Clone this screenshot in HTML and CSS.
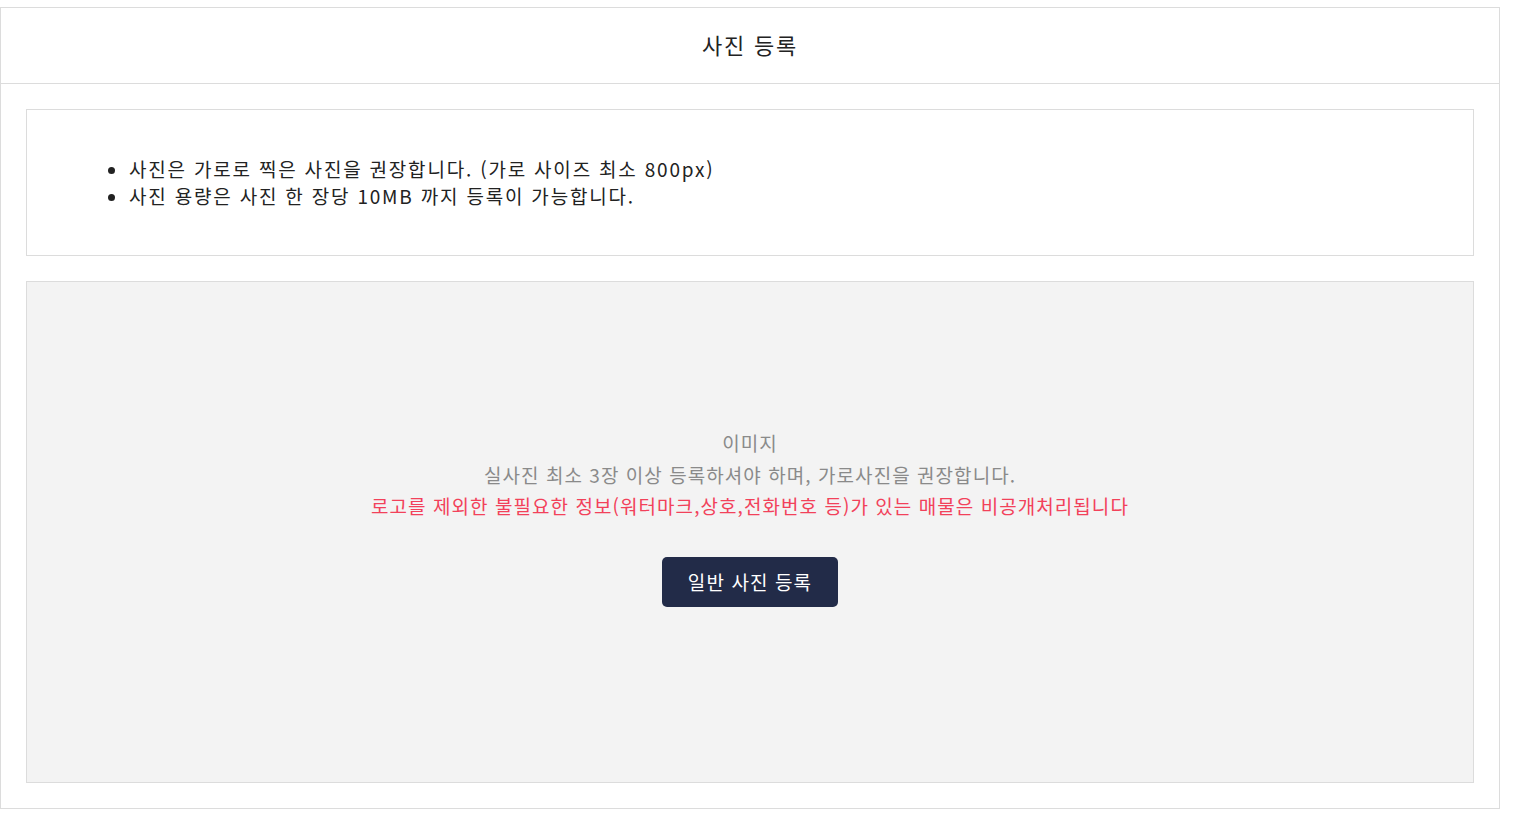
FILE: index.html
```html
<!DOCTYPE html>
<html lang="ko">
<head>
<meta charset="utf-8">
<link rel="stylesheet" href="styles.css">
</head>
<body>
<div class="panel">
  <div class="panel-head">사진 등록</div>
  <div class="panel-body">
    <div class="notice">
      <ul>
        <li>사진은 가로로 찍은 사진을 권장합니다. (가로 사이즈 최소 800px)</li>
        <li>사진 용량은 사진 한 장당 10MB 까지 등록이 가능합니다.</li>
      </ul>
    </div>
    <div class="dropzone">
      <p class="dz-text">이미지</p>
      <p class="dz-text">실사진 최소 3장 이상 등록하셔야 하며, 가로사진을 권장합니다.</p>
      <p class="dz-text dz-warn">로고를 제외한 불필요한 정보(워터마크,상호,전화번호 등)가 있는 매물은 비공개처리됩니다</p>
      <button class="btn-upload" type="button">일반 사진 등록</button>
    </div>
  </div>
</div>
</body>
</html>
```
FILE: styles.css
```css
html, body {
  margin: 0;
  padding: 0;
  background: #fff;
}
body {
  padding-top: 7px;
  font-family: "Noto Sans CJK KR", "Noto Sans", sans-serif;
  color: #222;
}
.panel {
  width: 1500px;
  box-sizing: border-box;
  border: 1px solid #dcdcdc;
}
.panel-head {
  height: 76px;
  box-sizing: border-box;
  padding-bottom: 3px;
  display: flex;
  align-items: center;
  justify-content: center;
  font-size: 22px;
  letter-spacing: 1.8px;
  color: #222;
  border-bottom: 1px solid #dcdcdc;
}
.panel-body {
  padding: 25px;
  display: flex;
  flex-direction: column;
  gap: 25px;
}
.notice {
  border: 1px solid #dcdcdc;
  padding: 45px 62px 46px;
  font-size: 19px;
  line-height: 27px;
  letter-spacing: 1.8px;
  color: #222;
}
.notice ul {
  margin: 0;
  padding-left: 40px;
}
.dropzone {
  height: 500px;
  background: #f3f3f3;
  border: 1px solid #dcdcdc;
  display: flex;
  flex-direction: column;
  align-items: center;
}
.dz-text {
  margin: 0;
  font-size: 19px;
  line-height: 31.5px;
  letter-spacing: 1.05px;
  color: #8a8a8a;
}
.dz-text:first-child {
  margin-top: 145px;
}
.dz-warn {
  color: #f2415a;
}
.btn-upload {
  margin-top: 35px;
  width: 176px;
  height: 50px;
  border: none;
  border-radius: 5px;
  background: #222b48;
  color: #fff;
  font-family: inherit;
  font-size: 19px;
  letter-spacing: 1.1px;
  cursor: pointer;
}
```
